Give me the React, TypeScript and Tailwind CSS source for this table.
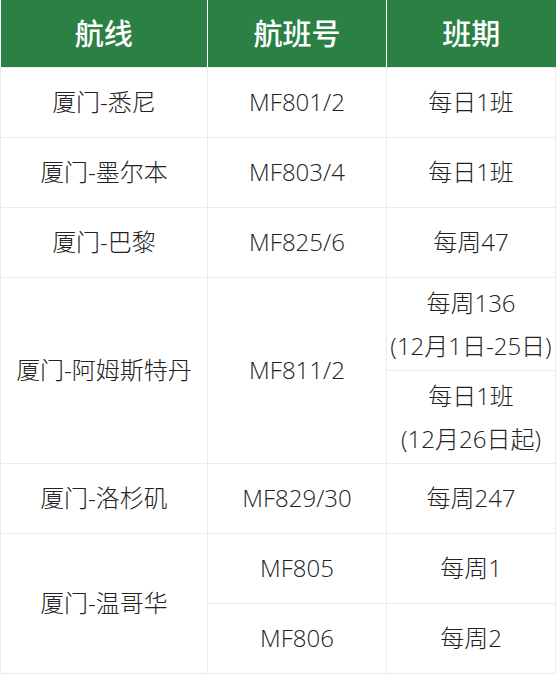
const font = { fontFamily: '"Open Sans", "Noto Sans CJK SC", sans-serif' };

type Row = { route: string; flights: { no: string; sched: string[] }[]; split?: boolean };

const rows: Row[] = [
  { route: "厦门-悉尼", flights: [{ no: "MF801/2", sched: ["每日1班"] }] },
  { route: "厦门-墨尔本", flights: [{ no: "MF803/4", sched: ["每日1班"] }] },
  { route: "厦门-巴黎", flights: [{ no: "MF825/6", sched: ["每周47"] }] },
];

const cell = "border border-[#ebebeb] text-center align-middle p-0";

export default function App() {
  return (
    <div className="w-[556px] bg-white text-[#222] text-[24px] font-light" style={font}>
      <table className="w-full border-collapse table-fixed">
        <colgroup>
          <col className="w-[207px]" />
          <col className="w-[179px]" />
          <col />
        </colgroup>
        <thead>
          <tr className="h-[67px] bg-[#2b8044] text-white text-[29px]">
            <th className="border-r border-white font-medium">航线</th>
            <th className="border-r border-white font-medium">航班号</th>
            <th className="font-medium">班期</th>
          </tr>
        </thead>
        <tbody>
          {rows.map((r) => (
            <tr key={r.route} className="h-[70px]">
              <td className={cell}>{r.route}</td>
              <td className={cell}>{r.flights[0].no}</td>
              <td className={cell}>{r.flights[0].sched[0]}</td>
            </tr>
          ))}
          <tr className="h-[93px]">
            <td className={cell} rowSpan={2}>厦门-阿姆斯特丹</td>
            <td className={cell} rowSpan={2}>MF811/2</td>
            <td className={`${cell} leading-[43px]`}>
              <div>每周136</div>
              <div>(12月1日-25日)</div>
            </td>
          </tr>
          <tr className="h-[93px]">
            <td className={`${cell} leading-[43px]`}>
              <div>每日1班</div>
              <div>(12月26日起)</div>
            </td>
          </tr>
          <tr className="h-[70px]">
            <td className={cell}>厦门-洛杉矶</td>
            <td className={cell}>MF829/30</td>
            <td className={cell}>每周247</td>
          </tr>
          <tr className="h-[70px]">
            <td className={cell} rowSpan={2}>厦门-温哥华</td>
            <td className={cell}>MF805</td>
            <td className={cell}>每周1</td>
          </tr>
          <tr className="h-[70px]">
            <td className={cell}>MF806</td>
            <td className={cell}>每周2</td>
          </tr>
        </tbody>
      </table>
    </div>
  );
}
